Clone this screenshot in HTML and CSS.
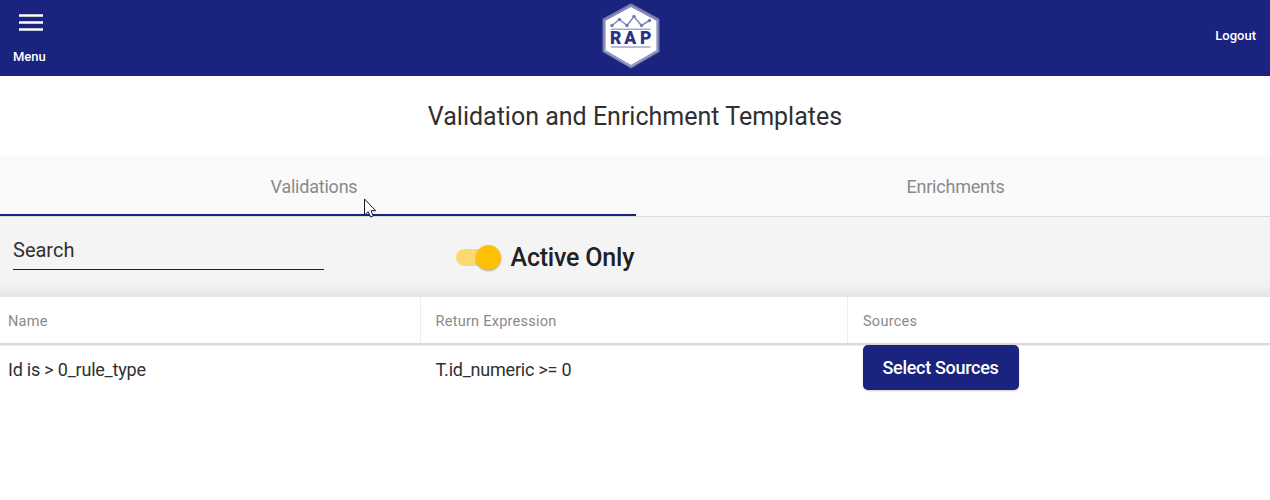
FILE: index.html
```html
<!DOCTYPE html>
<html lang="en">
<head>
<meta charset="utf-8">
<title>Validation and Enrichment Templates</title>
<link rel="stylesheet" href="styles.css">
</head>
<body>
<header class="topbar">
  <button class="menu-button">
    <svg class="menu-icon" viewBox="0 0 24 17"><path d="M0 1.500h24M0 8.500h24M0 15.500h24" stroke="#fff" stroke-width="2.700"/></svg>
    <span class="menu-label">Menu</span>
  </button>
  <svg class="logo" viewBox="0 0 60 68" role="img" aria-label="RAP">
    <path d="M30 2.500L57.500 17.500V49.500L30 65.500L2.500 49.500V17.500Z" fill="#fff" stroke="#7479b0" stroke-width="2" stroke-linejoin="round"/>
    <path d="M30 4.500L56 18.500V48.500L30 63.500L4 48.500V18.500Z" fill="none" stroke="#6a71aa" stroke-width="1"/>
    <path d="M11 23.500L18.500 17.500L26 23.500L33 14.500L40.500 23.500L48.500 18.500" fill="none" stroke="#8489bb" stroke-width="1.500"/>
    <g fill="#7479b0"><circle cx="11" cy="23.500" r="1.700"/><circle cx="18.500" cy="17.500" r="1.700"/><circle cx="26" cy="23.500" r="1.700"/><circle cx="33" cy="14.500" r="1.700"/><circle cx="40.500" cy="23.500" r="1.700"/><circle cx="48.500" cy="18.500" r="1.700"/></g>
    <path d="M10 27.200H49.500M10 45H49.500" stroke="#a3a8cf" stroke-width="1.600"/>
    <text class="logo-text" y="42"><tspan x="9">R</tspan><tspan x="23.300">A</tspan><tspan x="39">P</tspan></text>
  </svg>
  <a class="logout">Logout</a>
</header>
<h1 class="title">Validation and Enrichment Templates</h1>
<nav class="tabs">
  <a class="tab tab-active">Validations</a>
  <a class="tab">Enrichments</a>
</nav>
<section class="filters">
  <div class="search">Search</div>
  <div class="toggle-field">
    <span class="toggle"><span class="knob"></span></span>
    <span class="toggle-label">Active Only</span>
  </div>
</section>
<main class="table">
  <div class="row head">
    <div class="cell">Name</div>
    <div class="cell">Return Expression</div>
    <div class="cell">Sources</div>
  </div>
  <div class="row body-row">
    <div class="cell">Id is &gt; 0_rule_type</div>
    <div class="cell">T.id_numeric &gt;= 0</div>
    <div class="cell"><button class="select-button">Select Sources</button></div>
  </div>
</main>
<svg class="cursor" viewBox="0 0 13 20"><path d="M.5 1V17.200L4.200 13.800L6.700 19L9.200 17.900L7 12.700H11.700Z" fill="#fff" stroke="#15152a" stroke-width="1"/></svg>
</body>
</html>
```

FILE: styles.css
```css
* { box-sizing: border-box; }
body {
  margin: 0;
  height: 500px;
  overflow: hidden;
  position: relative;
  background: #fff;
  color: #303030;
  font-family: Roboto, sans-serif;
}
button { border: 0; font-family: inherit; color: #fff; }
.topbar {
  height: 76px;
  background: #1a237e;
  color: #fff;
  display: grid;
  grid-template-columns: 1fr 60px 1fr;
}
.menu-button {
  justify-self: start;
  background: none;
  padding: 13.5px 0 0 13px;
  display: flex;
  flex-direction: column;
  align-items: flex-start;
}
.menu-icon { width: 24px; height: 17px; margin-left: 6px; }
.menu-label { font-size: 13px; font-weight: 500; line-height: 16px; margin-top: 18.5px; }
.logo { width: 60px; height: 68px; margin: 2px 0 0 -4px; }
.logo-text { font-size: 17.5px; font-weight: 900; fill: #2b3282; }
.logout {
  justify-self: end;
  padding: 27px 14px 0 0;
  font-size: 13px;
  font-weight: 500;
  line-height: 17px;
}
.title {
  margin: 0;
  height: 80px;
  line-height: 81px;
  text-align: center;
  font-size: 25px;
  font-weight: 400;
}
.tabs {
  height: 61px;
  display: grid;
  grid-template-columns: 636px 1fr;
  background: #fafafa;
  border-bottom: 1px solid #dcdcdc;
}
.tab {
  color: #8a8a8a;
  font-size: 18px;
  line-height: 61px;
  letter-spacing: -0.22px;
  text-align: center;
  height: 60px;
}
.tab-active { border-bottom: 2px solid #1a237e; padding-right: 8px; }
.tab:last-child { padding-left: 5px; }
.filters {
  height: 80px;
  display: flex;
  align-items: flex-start;
  padding-left: 13px;
  background: linear-gradient(#f4f4f4 0, #f4f4f4 60px, #f0f0f0 70px, #e4e4e4 80px);
}
.search {
  width: 311px;
  height: 53px;
  padding-top: 21px;
  border-bottom: 1px solid #212121;
  font-size: 20px;
  line-height: 25px;
}
.toggle-field { display: flex; align-items: center; margin: 23px 0 0 132px; height: 34px; }
.toggle {
  width: 45px;
  height: 17px;
  border-radius: 9px;
  background: #fad973;
  display: flex;
  justify-content: flex-end;
  align-items: center;
}
.knob {
  width: 25px;
  height: 25px;
  flex: none;
  border-radius: 50%;
  background: #ffc107;
  box-shadow: 0 1px 2px #0005;
}
.toggle-label {
  margin-left: 9.5px;
  color: #212121;
  font-size: 25px;
  font-weight: 500;
  letter-spacing: -0.2px;
}
.row { display: grid; grid-template-columns: 420px 427px 1fr; }
.head {
  height: 49px;
  color: #8a8a8a;
  font-size: 14.5px;
  line-height: 49px;
  letter-spacing: 0.26px;
  border-bottom: 1px solid #f0f0f0;
  box-shadow: inset 0 -2px #d9d9d9;
}
.cell { padding-left: 15px; }
.cell:first-child { padding-left: 8px; }
.head .cell { height: 46px; }
.head .cell + .cell { border-left: 1px solid #ececec; padding-left: 14.5px; }
.head .cell:last-child { padding-left: 15px; }
.body-row { font-size: 18px; line-height: 48px; letter-spacing: -0.22px; }
.body-row .cell + .cell { padding-left: 15.5px; }
.body-row .cell:last-child { padding-left: 16px; }
.select-button {
  display: block;
  width: 156px;
  height: 45px;
  margin-top: -1px;
  padding: 0 1px 0 0;
  border-radius: 5px;
  background: #1a237e;
  font-size: 18px;
  font-weight: 500;
  letter-spacing: -0.3px;
  box-shadow: 0 1px 2px #0003;
}
.cursor { position: absolute; left: 364px; top: 198px; width: 13px; height: 20px; }
```
